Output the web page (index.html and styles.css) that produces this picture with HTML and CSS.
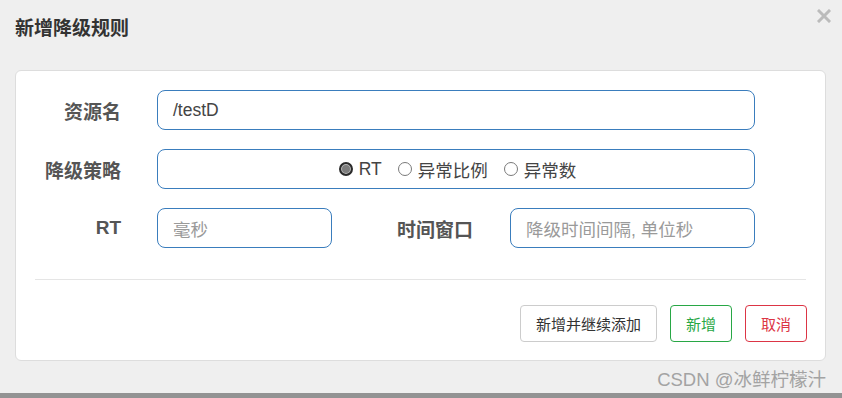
FILE: index.html
```html
<!DOCTYPE html>
<html lang="zh-CN">
<head>
    <meta charset="UTF-8">
    <meta name="viewport" content="width=device-width, initial-scale=1.0">
    <title>新增降级规则</title>
    <link rel="stylesheet" href="styles.css">
</head>
<body>
    <div class="dialog">
        <header class="dialog-header">
            <h4 class="dialog-title">新增降级规则</h4>
            <span class="close-btn">
                <svg width="14" height="14" viewBox="0 0 14 14">
                    <path d="M2 2 L12 12 M12 2 L2 12" stroke="#bbbbbb" stroke-width="3" stroke-linecap="square"/>
                </svg>
            </span>
        </header>

        <div class="card">
            <div class="form">
                <div class="form-row">
                    <label class="form-label">资源名</label>
                    <div class="input">/testD</div>
                </div>

                <div class="form-row">
                    <label class="form-label">降级策略</label>
                    <div class="input radio-group">
                        <span class="radio-item"><span class="radio checked"></span>RT</span>
                        <span class="radio-item"><span class="radio"></span>异常比例</span>
                        <span class="radio-item"><span class="radio"></span>异常数</span>
                    </div>
                </div>

                <div class="form-row">
                    <label class="form-label">RT</label>
                    <div class="input input-short placeholder">毫秒</div>
                    <label class="form-label label-wide">时间窗口</label>
                    <div class="input placeholder">降级时间间隔, 单位秒</div>
                </div>
            </div>

            <hr class="divider">

            <!-- 底部按钮 -->
            <div class="actions">
                <button class="btn btn-default">新增并继续添加</button>
                <button class="btn btn-success">新增</button>
                <button class="btn btn-danger">取消</button>
            </div>
        </div>

        <div class="watermark">CSDN @冰鲜柠檬汁</div>
    </div>
    <div class="bottom-bar"></div>
</body>
</html>
```

FILE: styles.css
```css
:root {
    --bg-page: #efefef;
    --text-title: #333333;
    --text-label: #555555;
    --text-input: #444444;
    --placeholder: #9a9a9a;
    --input-border: #3a7dbd;
    --card-border: #dddddd;
}

* {
    margin: 0;
    padding: 0;
    box-sizing: border-box;
}

body {
    font-family: "Liberation Sans", "Noto Sans CJK SC", sans-serif;
    background-color: var(--bg-page);
    width: 842px;
    height: 398px;
    overflow: hidden;
}

.dialog {
    height: 393px;
    display: flex;
    flex-direction: column;
}

.dialog-header {
    height: 70px;
    padding: 0 11px 0 15px;
    display: flex;
    justify-content: space-between;
    align-items: flex-start;
}

.dialog-title {
    margin-top: 18px;
    font-size: 19px;
    line-height: 22px;
    font-weight: bold;
    color: var(--text-title);
}

.close-btn {
    margin-top: 9px;
    display: flex;
}

.card {
    margin: 0 16px 0 15px;
    height: 291px;
    background: #ffffff;
    border: 1px solid var(--card-border);
    border-radius: 6px;
    padding: 19px 0 18px 0;
    display: flex;
    flex-direction: column;
}

.form {
    display: flex;
    flex-direction: column;
    gap: 19px;
    padding-right: 70px;
}

.form-row {
    display: flex;
    align-items: center;
    height: 40px;
}

.form-label {
    width: 105px;
    flex-shrink: 0;
    margin-right: 36px;
    text-align: right;
    font-size: 19px;
    font-weight: bold;
    color: var(--text-label);
}

.label-wide {
    width: 141px;
    margin-right: 37px;
}

.input {
    flex: 1;
    height: 40px;
    border: 1px solid var(--input-border);
    border-radius: 8px;
    padding: 0 15px;
    display: flex;
    align-items: center;
    font-size: 17.5px;
    color: var(--text-input);
}

.input-short {
    flex: 0 0 175px;
}

.placeholder {
    color: var(--placeholder);
}

.radio-group {
    justify-content: center;
    gap: 16px;
    padding-left: 18px;
}

.radio-item {
    display: flex;
    align-items: center;
    gap: 6px;
}

.radio {
    width: 14px;
    height: 14px;
    border-radius: 50%;
    border: 1px solid #7a7a7a;
    background: #ffffff;
}

.radio.checked {
    border: 2px solid #2a2a2a;
    background: #7d7d7d;
    box-shadow: inset 0 0 0 1px #bdbdbd;
}

.divider {
    border: none;
    border-top: 1px solid #e5e5e5;
    margin: 31px 19px 0 19px;
}

.actions {
    margin-top: 25px;
    padding-right: 18px;
    display: flex;
    justify-content: flex-end;
    gap: 13px;
}

.btn {
    height: 37px;
    padding: 0 15px;
    font-family: "Liberation Sans", "Noto Sans CJK SC", sans-serif;
    font-size: 15px;
    background: #ffffff;
    border-radius: 4px;
    border: 1px solid #cccccc;
    color: #333333;
}

.btn-success {
    border-color: #28a745;
    color: #28a745;
}

.btn-danger {
    border-color: #dc3545;
    color: #dc3545;
}

.watermark {
    flex: 1;
    display: flex;
    align-items: center;
    justify-content: flex-end;
    padding-right: 16px;
    padding-top: 2px;
    font-size: 18.5px;
    color: #a3a3a3;
}

.bottom-bar {
    height: 5px;
    background: #939393;
}
```
